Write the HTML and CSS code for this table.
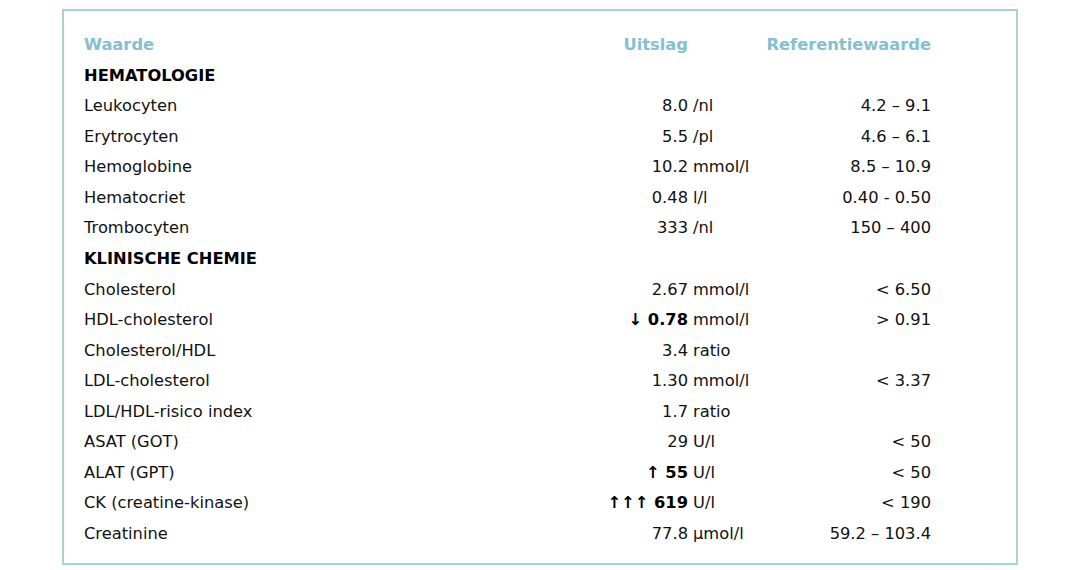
FILE: index.html
```html
<!DOCTYPE html>
<html lang="nl">
<head>
<meta charset="utf-8">
<title>Uitslagen</title>
<link rel="stylesheet" href="styles.css">
</head>
<body>
<div class="card">
  <div class="grid">
    <div class="c name head">Waarde</div>
    <div class="c num head">Uitslag</div>
    <div class="c unit"></div>
    <div class="c ref head">Referentiewaarde</div>

    <div class="c name section">HEMATOLOGIE</div>
    <div class="c num"></div><div class="c unit"></div><div class="c ref"></div>

    <div class="c name">Leukocyten</div><div class="c num">8.0</div><div class="c unit">/nl</div><div class="c ref">4.2 – 9.1</div>
    <div class="c name">Erytrocyten</div><div class="c num">5.5</div><div class="c unit">/pl</div><div class="c ref">4.6 – 6.1</div>
    <div class="c name">Hemoglobine</div><div class="c num">10.2</div><div class="c unit">mmol/l</div><div class="c ref">8.5 – 10.9</div>
    <div class="c name">Hematocriet</div><div class="c num">0.48</div><div class="c unit">l/l</div><div class="c ref">0.40 - 0.50</div>
    <div class="c name">Trombocyten</div><div class="c num">333</div><div class="c unit">/nl</div><div class="c ref">150 – 400</div>

    <div class="c name section">KLINISCHE CHEMIE</div>
    <div class="c num"></div><div class="c unit"></div><div class="c ref"></div>

    <div class="c name">Cholesterol</div><div class="c num">2.67</div><div class="c unit">mmol/l</div><div class="c ref">&lt; 6.50</div>
    <div class="c name">HDL-cholesterol</div><div class="c num flag">↓ 0.78</div><div class="c unit">mmol/l</div><div class="c ref">&gt; 0.91</div>
    <div class="c name">Cholesterol/HDL</div><div class="c num">3.4</div><div class="c unit">ratio</div><div class="c ref"></div>
    <div class="c name">LDL-cholesterol</div><div class="c num">1.30</div><div class="c unit">mmol/l</div><div class="c ref">&lt; 3.37</div>
    <div class="c name">LDL/HDL-risico index</div><div class="c num">1.7</div><div class="c unit">ratio</div><div class="c ref"></div>
    <div class="c name">ASAT (GOT)</div><div class="c num">29</div><div class="c unit">U/l</div><div class="c ref">&lt; 50</div>
    <div class="c name">ALAT (GPT)</div><div class="c num flag">↑ 55</div><div class="c unit">U/l</div><div class="c ref">&lt; 50</div>
    <div class="c name">CK (creatine-kinase)</div><div class="c num flag">↑↑↑ 619</div><div class="c unit">U/l</div><div class="c ref">&lt; 190</div>
    <div class="c name">Creatinine</div><div class="c num">77.8</div><div class="c unit">µmol/l</div><div class="c ref">59.2 – 103.4</div>
  </div>
</div>
</body>
</html>
```
FILE: styles.css
```css
html, body {
  margin: 0;
  padding: 0;
  background: #ffffff;
}
body {
  font-family: "DejaVu Sans", Verdana, sans-serif;
  font-size: 16.3px;
  line-height: 18.56px;
  color: #111111;
}
.card {
  box-sizing: border-box;
  width: 956px;
  height: 556px;
  margin: 9px auto 0;
  border: 2px solid #a6d3d8;
  padding: 19px 20px 15px 20px;
}
.grid {
  display: grid;
  grid-template-columns: 460px 144px 70px 173px;
}
.c {
  padding: 6px 0;
  white-space: nowrap;
}
.num {
  text-align: right;
}
.unit {
  padding-left: 5px;
}
.ref {
  text-align: right;
}
.head {
  font-weight: bold;
  color: #83c0d0;
}
.section {
  font-weight: bold;
  color: #000000;
}
.flag {
  font-weight: bold;
  color: #000000;
}
```
